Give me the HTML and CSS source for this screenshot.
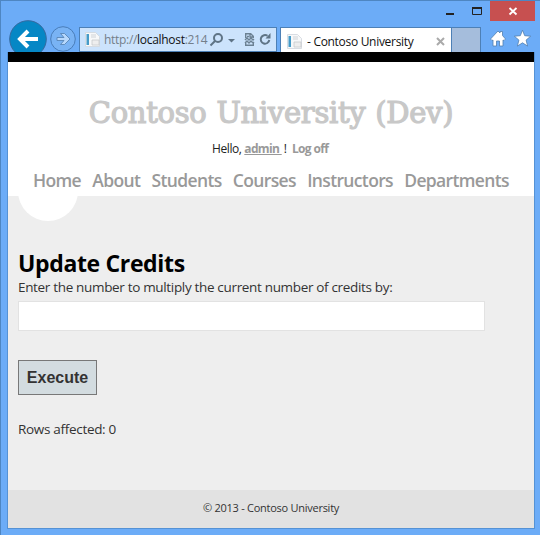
FILE: index.html
```html
<!DOCTYPE html>
<html lang="en">
<head>
<meta charset="utf-8">
<title>- Contoso University</title>
<link rel="stylesheet" href="styles.css">
</head>
<body>
<div class="window">
  <header class="chrome">
    <div class="titlebar">
      <svg class="controls" width="45" height="20" viewBox="0 0 45 20"><path fill="#222" d="M1 12h8v2H1z"/><path fill="none" stroke="#222" d="M27.500 7v6.500h9V7z"/><path fill="#222" d="M27 6h10v2H27z"/></svg>
      <div class="close"><svg width="45" height="20" viewBox="0 0 45 20"><path d="M19.500 7l7 6.500M26.500 7l-7 6.500" stroke="#fff" stroke-width="1.800"/></svg></div>
    </div>
    <div class="toolbar">
      <svg class="nav" width="71" height="37" viewBox="0 0 71 37"><circle cx="20" cy="19" r="18.300" fill="#0587c5" stroke="#35699f"/><path d="M30 19H13M20 11l-8 8 8 8" fill="none" stroke="#fff" stroke-width="4"/><circle cx="55" cy="19" r="12.300" fill="#79b3f4" stroke="#497db9"/><path d="M49 17.500h7l-3.500-4h4l5.500 5.500-5.500 5.500h-4l3.500-4h-7z" fill="#b7d8fc" stroke="#527fae" stroke-width=".8"/></svg>
      <div class="address">
        <svg class="doc" width="17" height="17" viewBox="0 0 17 17"><path d="M1.500 1.500h10l4 4V15.500h-14z" fill="#f7f8f9" stroke="#d0d6dc" stroke-width=".8"/><path d="M2.500 3h2.500v11H2.500z" fill="#459bc8"/><path d="M7 4h5M7 6h5" stroke="#cfd3d7"/><path d="M8 9h7v5H8z" fill="#eee" stroke="#c7c9cc" stroke-width=".8"/></svg>
        <span class="url">http://<b>localhost</b>:214</span>
        <svg class="tools" width="65" height="18" viewBox="0 0 65 18"><g fill="none" stroke="#5f7486" stroke-width="2"><circle cx="9" cy="7" r="4"/><path d="M6 10l-4.500 4.500"/></g><path d="M19 8h7l-3.500 3.500z" fill="#5f7486"/><g fill="none" stroke="#6c8193" stroke-width="1.400"><path d="M36.700 7V2.700h5l2.600 2.600V7M41 3v3h3M38 5.500h2M36 9l2-2 2 2 2-2 2 2 1-1M36 12l2-2 2 2 2-2 2 2 1-1M36.700 11v3.300h7.600V12"/></g><path d="M58.500 4.800A4.300 4.300 0 1 0 60.300 9" fill="none" stroke="#5f7486" stroke-width="2"/><path d="M56.500 7.500H61.500V2z" fill="#5f7486"/></svg>
      </div>
      <div class="tab">
        <svg class="doc" width="17" height="17" viewBox="0 0 17 17"><path d="M1.500 1.500h10l4 4V15.500h-14z" fill="#f7f8f9" stroke="#d0d6dc" stroke-width=".8"/><path d="M2.500 3h2.500v11H2.500z" fill="#459bc8"/><path d="M7 4h5M7 6h5" stroke="#cfd3d7"/><path d="M8 9h7v5H8z" fill="#eee" stroke="#c7c9cc" stroke-width=".8"/></svg>
        <span class="tab-title">- Contoso University</span>
        <svg class="tab-close" width="9" height="9" viewBox="0 0 9 9"><path d="M1 1l7 7M8 1L1 8" stroke="#aaa" stroke-width="2"/></svg>
      </div>
      <div class="newtab"></div>
      <svg class="actions" width="55" height="24" viewBox="0 0 55 24"><g fill="#fff" stroke="#527fae" stroke-width=".8"><path d="M10.500 12L18 4l2 2V4.500h2.500V8.500l3 3.500-1.500 1.500-1-.5v6h-3.500v-5h-3v5H13v-6l-1 .5z"/><path d="M42.500 3.200l2.200 5.500 6 .5-4.600 3.900 1.500 6-5.100-3.300-5.100 3.300 1.500-6-4.600-3.900 6-.5z"/></g></svg>
    </div>
  </header>
  <div class="page">
    <div class="masthead">
      <h1><span class="site">Contoso University (Dev)</span></h1>
      <p class="login"><span class="hello">Hello, </span><a class="admin">admin </a><span class="bang">!</span><a class="logoff">Log off</a></p>
      <nav class="menu"><a>Home</a><a>About</a><a>Students</a><a>Courses</a><a>Instructors</a><a>Departments</a></nav>
    </div>
    <main class="content">
      <div class="bump"></div>
      <h2>Update Credits</h2>
      <label for="multiplier">Enter the number to multiply the current number of credits by:</label>
      <input id="multiplier" type="text">
      <button type="button">Execute</button>
      <p class="result">Rows affected: 0</p>
    </main>
    <footer>© 2013 - Contoso University</footer>
  </div>
</div>
</body>
</html>
```
FILE: styles.css
```css
* { box-sizing: border-box; }
body { margin: 0; font-family: "Open Sans", "Noto Sans", sans-serif; color: #333; }
h1, h2, p { margin: 0; font-weight: normal; }
svg { display: block; flex: none; }
.window { width: 540px; height: 535px; background: #6cacf7; border-top: 1px solid #4e86c2; border-left: 1px solid #4e86c2; overflow: hidden; white-space: nowrap; }
.chrome { height: 51px; overflow: hidden; }
.titlebar { height: 20px; display: flex; justify-content: flex-end; padding-right: 5px; }
.close { background: #c75050; width: 45px; height: 20px; }
.toolbar { display: flex; height: 31px; align-items: flex-start; padding-left: 7px; }
.nav { margin-top: -1px; }
.address { width: 198px; height: 25px; margin-top: 6px; border: 1px solid #4d80b6; background: #cce3fc; display: flex; align-items: center; padding-left: 4px; }
.url { margin-left: 3px; font-size: 12px; width: 105px; color: #747f8a; letter-spacing: -.3px; flex: none; }
.url b { font-weight: normal; color: #111; }
.tab { width: 172px; height: 26px; margin: 6px 0 0 3px; border: 1px solid #4d80b6; border-bottom: 0; background: #fff; display: flex; align-items: center; padding: 2px 6px 0 5px; }
.tab-title { font-size: 12px; color: #111; margin-left: 4px; letter-spacing: -.3px; }
.tab-close { margin-left: auto; }
.newtab { width: 29px; height: 26px; margin-top: 6px; background: #a5bddc; border: 1px solid #4d80b6; border-left: 0; border-bottom: 0; }
.actions { margin: 6px 0 0 -1px; }
.page { width: 528px; height: 477px; margin-left: 6px; border: 1px solid #5592d5; border-top: 0; display: flex; flex-direction: column; }
.masthead { height: 144px; border-top: 10px solid #000; background: #fff; flex: none; }
h1 { text-align: center; height: 74px; padding-top: 30px; line-height: 38px; }
.site { font: 29px/38px "DejaVu Serif", serif; letter-spacing: -.3px; word-spacing: 1px; color: #c8c8c8; -webkit-text-stroke: 1.200px #c8c8c8; }
.login { height: 27px; line-height: 25px; font-size: 12px; padding-left: 204px; display: flex; color: #222; white-space: pre; }
.hello { letter-spacing: -.4px; }
.login a { color: #999; font-weight: 700; letter-spacing: -.65px; }
.login .admin { text-decoration: underline; }
.bang { margin: 0 5px 0 2px; }
.menu { display: flex; gap: 11.300px; margin-left: 25px; font-size: 17.500px; font-weight: 600; line-height: 35px; letter-spacing: -.65px; color: #999; }
.content { height: 294px; background: #eee; padding-left: 10px; flex: none; }
.bump { width: 60px; height: 25px; overflow: hidden; }
.bump::before { content: ""; display: block; width: 60px; height: 60px; margin-top: -35px; border-radius: 50%; background: #fff; }
h2 { margin-top: 25px; height: 32px; line-height: 34px; font-size: 23px; letter-spacing: -.35px; font-weight: bold; color: #000; }
label { display: block; height: 23px; line-height: 19px; font-size: 13.500px; letter-spacing: -.33px; }
input { display: block; width: 467px; height: 30px; background: #fff; border: 1px solid #e2e2e2; padding: 5px; outline: 0; }
button { display: block; width: 79px; height: 35px; margin-top: 29px; padding: 0; border: 1px solid #787878; background: #d3dce0; color: #333; font: bold 16px "Liberation Sans", sans-serif; }
.result { margin-top: 25px; line-height: 19px; font-size: 13.500px; letter-spacing: -.31px; }
footer { flex: 1; background: #e2e2e2; text-align: center; font-size: 11px; line-height: 36px; letter-spacing: -.26px; }
```
